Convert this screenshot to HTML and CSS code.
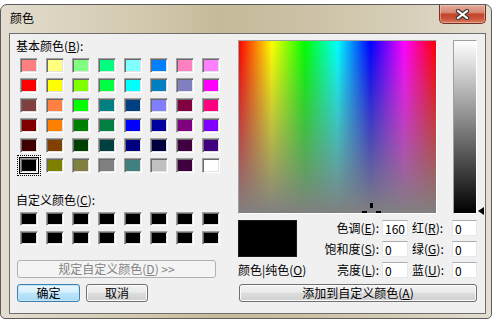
FILE: index.html
```html
<!DOCTYPE html>
<html lang="zh-CN">
<head>
    <meta charset="UTF-8">
    <title>颜色</title>
    <link rel="stylesheet" href="styles.css">
</head>
<body>

    <div class="window">
        <div class="titlebar">
            <span class="title">颜色</span>
            <button class="close">
                <svg width="15" height="11" viewBox="0 0 15 11">
                    <path d="M3 2 L12 9 M12 2 L3 9" stroke="#3b3b3b" stroke-width="4.4" stroke-linecap="round"/>
                    <path d="M3 2 L12 9 M12 2 L3 9" stroke="#fff" stroke-width="2.2" stroke-linecap="round"/>
                </svg>
            </button>
        </div>

        <div class="client">
            <div class="left">
                <div class="label">基本颜色(<u>B</u>):</div>
                <div class="swatches basic">
                    <div class="sw" style="background:#ff8080"></div>
                    <div class="sw" style="background:#ffff80"></div>
                    <div class="sw" style="background:#80ff80"></div>
                    <div class="sw" style="background:#00ff80"></div>
                    <div class="sw" style="background:#80ffff"></div>
                    <div class="sw" style="background:#0080ff"></div>
                    <div class="sw" style="background:#ff80c0"></div>
                    <div class="sw" style="background:#ff80ff"></div>

                    <div class="sw" style="background:#ff0000"></div>
                    <div class="sw" style="background:#ffff00"></div>
                    <div class="sw" style="background:#80ff00"></div>
                    <div class="sw" style="background:#00ff40"></div>
                    <div class="sw" style="background:#00ffff"></div>
                    <div class="sw" style="background:#0080c0"></div>
                    <div class="sw" style="background:#8080c0"></div>
                    <div class="sw" style="background:#ff00ff"></div>

                    <div class="sw" style="background:#804040"></div>
                    <div class="sw" style="background:#ff8040"></div>
                    <div class="sw" style="background:#00ff00"></div>
                    <div class="sw" style="background:#008080"></div>
                    <div class="sw" style="background:#004080"></div>
                    <div class="sw" style="background:#8080ff"></div>
                    <div class="sw" style="background:#800040"></div>
                    <div class="sw" style="background:#ff0080"></div>

                    <div class="sw" style="background:#800000"></div>
                    <div class="sw" style="background:#ff8000"></div>
                    <div class="sw" style="background:#008000"></div>
                    <div class="sw" style="background:#008040"></div>
                    <div class="sw" style="background:#0000ff"></div>
                    <div class="sw" style="background:#0000a0"></div>
                    <div class="sw" style="background:#800080"></div>
                    <div class="sw" style="background:#8000ff"></div>

                    <div class="sw" style="background:#400000"></div>
                    <div class="sw" style="background:#804000"></div>
                    <div class="sw" style="background:#004000"></div>
                    <div class="sw" style="background:#004040"></div>
                    <div class="sw" style="background:#000080"></div>
                    <div class="sw" style="background:#000040"></div>
                    <div class="sw" style="background:#400040"></div>
                    <div class="sw" style="background:#400080"></div>

                    <div class="sw sel" style="background:#000000"></div>
                    <div class="sw" style="background:#808000"></div>
                    <div class="sw" style="background:#808040"></div>
                    <div class="sw" style="background:#808080"></div>
                    <div class="sw" style="background:#408080"></div>
                    <div class="sw" style="background:#c0c0c0"></div>
                    <div class="sw" style="background:#400040"></div>
                    <div class="sw" style="background:#ffffff"></div>
                </div>

                <div class="label custom-label">自定义颜色(<u>C</u>):</div>
                <div class="swatches custom">
                    <div class="sw"></div><div class="sw"></div><div class="sw"></div><div class="sw"></div>
                    <div class="sw"></div><div class="sw"></div><div class="sw"></div><div class="sw"></div>
                    <div class="sw"></div><div class="sw"></div><div class="sw"></div><div class="sw"></div>
                    <div class="sw"></div><div class="sw"></div><div class="sw"></div><div class="sw"></div>
                </div>

                <button class="btn disabled define">规定自定义颜色(<u>D</u>) &gt;&gt;</button>
                <div class="actions">
                    <button class="btn default ok">确定</button>
                    <button class="btn cancel">取消</button>
                </div>
            </div>

            <div class="right">
                <div class="picker">
                    <div class="spectrum">
                        <i class="cross c-top"></i>
                        <i class="cross c-left"></i>
                        <i class="cross c-right"></i>
                    </div>
                    <div class="lum"><span class="arrow"></span></div>
                </div>

                <div class="fields">
                    <div class="preview"></div>
                    <div class="f-label">色调(<u>E</u>):</div>
                    <input class="num" type="text" value="160">
                    <div class="f-label2">红(<u>R</u>):</div>
                    <input class="num" type="text" value="0">

                    <div class="f-label">饱和度(<u>S</u>):</div>
                    <input class="num" type="text" value="0">
                    <div class="f-label2">绿(<u>G</u>):</div>
                    <input class="num" type="text" value="0">

                    <div class="preview-label">颜色|纯色(<u>O</u>)</div>
                    <div class="f-label">亮度(<u>L</u>):</div>
                    <input class="num" type="text" value="0">
                    <div class="f-label2">蓝(<u>U</u>):</div>
                    <input class="num" type="text" value="0">
                </div>

                <button class="btn add">添加到自定义颜色(<u>A</u>)</button>
            </div>
        </div>
    </div>

</body>
</html>
```

FILE: styles.css
```css
* {
    box-sizing: border-box;
}

body {
    margin: 0;
    background-color: #fff;
    font-family: "Noto Sans CJK SC", "Noto Sans", sans-serif;
    font-size: 12px;
    color: #000;
}

u {
    text-decoration: underline;
}

.window {
    width: 492px;
    height: 315px;
    margin-top: 4px;
    border: 1px solid #5b5b5b;
    border-radius: 7px 7px 5px 5px;
    background: linear-gradient(to right, #e3ddd0, #d3c9af 28%, #c6ba9a 45%, #cbc0a3 60%, #d8d0bb 85%, #e4dfd3);
    display: flex;
    flex-direction: column;
}

.titlebar {
    height: 28px;
    display: flex;
    justify-content: space-between;
    align-items: flex-start;
    padding-left: 9px;
}

.title {
    line-height: 25px;
    font-size: 12px;
}

.close {
    width: 47px;
    height: 19px;
    margin-right: 5px;
    padding: 0;
    border: 1px solid #6e3326;
    border-top: none;
    border-radius: 0 0 5px 5px;
    background: linear-gradient(#e2ab9c, #d88a76 40%, #c2452a 52%, #c9533a 75%, #dc7a60);
    box-shadow: inset 0 0 0 1px rgba(255, 220, 200, 0.45);
    display: flex;
    align-items: center;
    justify-content: center;
}

.client {
    margin-left: 8px;
    width: 477px;
    height: 281px;
    border: 1px solid #6f6f6f;
    background-color: #f0f0f0;
    display: flex;
}

.left {
    width: 228px;
    padding: 5px 0 0 6px;
}

.label {
    height: 14px;
    line-height: 14px;
    white-space: nowrap;
}

.swatches {
    display: grid;
    grid-template-columns: repeat(8, 18px);
    column-gap: 8px;
    margin-left: 4px;
}

.basic {
    margin-top: 5px;
    grid-auto-rows: 15px;
    row-gap: 5px;
}

.custom-label {
    margin-top: 20px;
}

.custom {
    margin-top: 5px;
    grid-auto-rows: 14px;
    row-gap: 5px;
}

.sw {
    background-color: #000;
    border: 1px solid;
    border-color: #a0a0a0 #fff #fff #a0a0a0;
    box-shadow: inset 1px 1px #696969, inset -1px -1px #e3e3e3;
}

.sel {
    box-shadow: inset 1px 1px #696969, inset -1px -1px #e3e3e3, 0 0 0 1px #000;
    outline: 1px dotted #000;
    outline-offset: 2px;
}

.btn {
    display: block;
    height: 18px;
    padding: 0;
    font: inherit;
    line-height: 16px;
    color: #000;
    border: 1px solid #707070;
    border-radius: 3px;
    background: linear-gradient(#f2f2f2, #ebebeb 45%, #dddddd 50%, #cfcfcf);
    box-shadow: inset 0 0 0 1px #fbfbfb;
}

.default {
    border-color: #3c7fb1;
    background: linear-gradient(#eaf6fd, #d9f0fc 45%, #bee6fd 50%, #a7d9f5);
    box-shadow: inset 0 0 0 1px #c4e5f6;
}

.disabled {
    color: #838383;
    border-color: #adb2b5;
    background: #f4f4f4;
    box-shadow: none;
}

.define {
    margin: 15px 0 0 1px;
    width: 199px;
}

.actions {
    display: flex;
    gap: 6px;
    margin: 6px 0 0 1px;
}

.ok {
    width: 63px;
}

.cancel {
    width: 62px;
}

.right {
    padding-top: 6px;
}

.picker {
    display: flex;
    height: 174px;
}

.spectrum {
    position: relative;
    width: 199px;
    border: 1px solid;
    border-color: #a0a0a0 #fff #fff #a0a0a0;
    background:
        linear-gradient(to bottom, rgba(128, 128, 128, 0), #808080),
        linear-gradient(to right, #f00, #ff0 16.67%, #0f0 33.33%, #0ff 50%, #00f 66.67%, #f0f 84%, #f00);
}

.cross {
    position: absolute;
    background-color: #000;
}

.c-top {
    left: 131px;
    top: 162px;
    width: 3px;
    height: 5px;
}

.c-left {
    left: 123px;
    top: 170px;
    width: 5px;
    height: 2px;
}

.c-right {
    left: 137px;
    top: 170px;
    width: 5px;
    height: 2px;
}

.lum {
    position: relative;
    width: 24px;
    margin-left: 16px;
    border: 1px solid;
    border-color: #a0a0a0 #fff #fff #a0a0a0;
    background: linear-gradient(#fff, #000);
}

.arrow {
    position: absolute;
    left: calc(100% + 2px);
    top: 166px;
    width: 0;
    height: 0;
    border-right: 6px solid #000;
    border-top: 4.5px solid transparent;
    border-bottom: 4.5px solid transparent;
}

.fields {
    display: grid;
    grid-template-columns: 59px 85px 26px 44px 25px;
    grid-template-rows: repeat(3, 16px);
    row-gap: 5px;
    margin-top: 6px;
}

.preview {
    grid-row: 1 / span 2;
    background-color: #000;
    border: 1px solid #1a1a1a;
}

.preview-label {
    line-height: 16px;
    white-space: nowrap;
}

.f-label {
    line-height: 16px;
    text-align: right;
    padding-right: 3px;
    white-space: nowrap;
}

.f-label2 {
    line-height: 16px;
    padding-left: 4px;
    white-space: nowrap;
}

.num {
    width: 100%;
    height: 16px;
    padding: 0 0 0 2px;
    font: inherit;
    line-height: 14px;
    background-color: #fff;
    border: 1px solid;
    border-color: #abadb3 #e3e9ef #e3e9ef #e2e3ea;
    outline: none;
}

.add {
    margin: 6px 0 0 1px;
    width: 238px;
}
```
